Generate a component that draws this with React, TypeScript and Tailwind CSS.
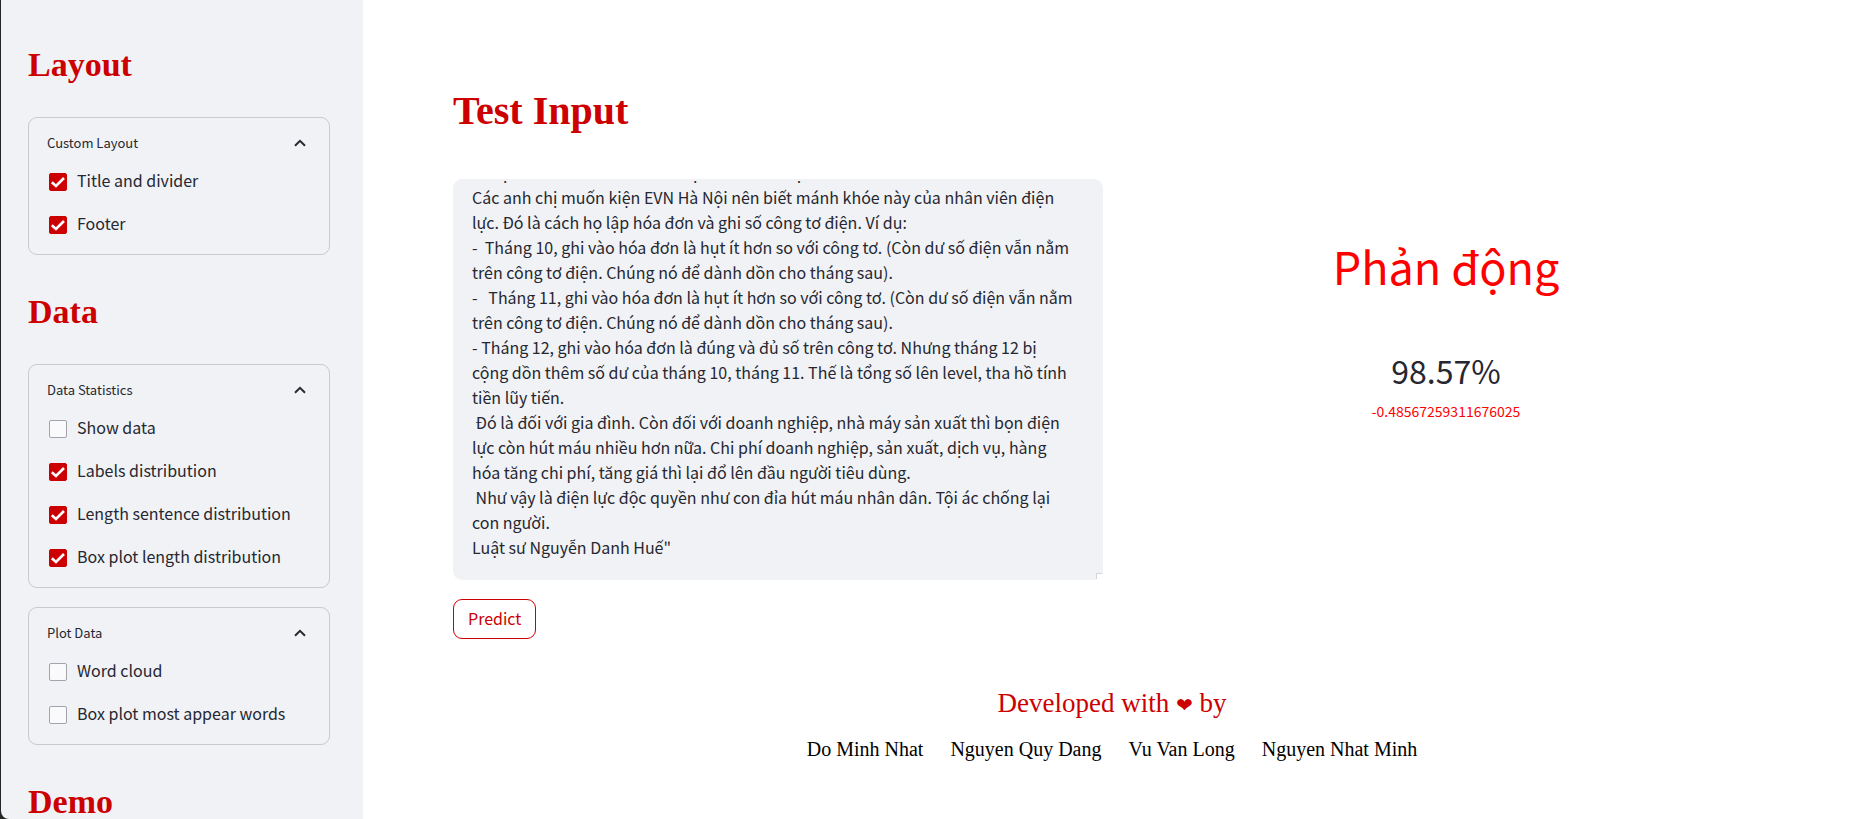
import { useLayoutEffect, useRef, useState } from "react";

const sans = "font-['Noto_Sans_CJK_SC','Noto_Sans',sans-serif]";
const serif = "font-['Liberation_Serif','DejaVu_Sans',serif]";

const ARTICLE = `Nhờ mọi người chia sẻ rộng rãi thông tin này:
Thoại cho biết trên các bản hiện có nhiều điện
Các anh chị muốn kiện EVN Hà Nội nên biết mánh khóe này của nhân viên điện lực. Đó là cách họ lập hóa đơn và ghi số công tơ điện. Ví dụ:
-  Tháng 10, ghi vào hóa đơn là hụt ít hơn so với công tơ. (Còn dư số điện vẫn nằm trên công tơ điện. Chúng nó để dành dồn cho tháng sau).
-   Tháng 11, ghi vào hóa đơn là hụt ít hơn so với công tơ. (Còn dư số điện vẫn nằm trên công tơ điện. Chúng nó để dành dồn cho tháng sau).
- Tháng 12, ghi vào hóa đơn là đúng và đủ số trên công tơ. Nhưng tháng 12 bị cộng dồn thêm số dư của tháng 10, tháng 11. Thế là tổng số lên level, tha hồ tính tiền lũy tiến.
 Đó là đối với gia đình. Còn đối với doanh nghiệp, nhà máy sản xuất thì bọn điện lực còn hút máu nhiều hơn nữa. Chi phí doanh nghiệp, sản xuất, dịch vụ, hàng hóa tăng chi phí, tăng giá thì lại đổ lên đầu người tiêu dùng.
 Như vậy là điện lực độc quyền như con đỉa hút máu nhân dân. Tội ác chống lại con người.
Luật sư Nguyễn Danh Huế"`;

const AUTHORS = ["Do Minh Nhat", "Nguyen Quy Dang", "Vu Van Long", "Nguyen Nhat Minh"];

type Option = { label: string; checked: boolean };

function CheckOption({ label, checked }: Option) {
  const [on, setOn] = useState(checked);
  return (
    <label className="flex h-[22px] cursor-pointer items-end gap-[10px] text-base leading-[22px]">
      <span className="grid size-[18px] shrink-0">
        <input
          type="checkbox"
          checked={on}
          onChange={(e) => setOn(e.target.checked)}
          className="col-start-1 row-start-1 size-[18px] appearance-none rounded-[2px] border border-[#a3a4ab] bg-[#fafafc] checked:border-[#cc0000] checked:bg-[#cc0000]"
        />
        {on && (
          <svg viewBox="0 0 18 18" className="pointer-events-none col-start-1 row-start-1 size-[18px]" aria-hidden="true">
            <path d="M2.8 9.2 L7 13 L15 5" fill="none" stroke="#fafafc" strokeWidth="2.7" />
          </svg>
        )}
      </span>
      {label}
    </label>
  );
}

function Expander({ title, options }: { title: string; options: Option[] }) {
  const [open, setOpen] = useState(true);
  return (
    <section className="rounded-[9px] border border-[#c9cacf] px-[18px] pt-[13px] pb-[20px]">
      <button
        type="button"
        aria-expanded={open}
        onClick={() => setOpen(!open)}
        className="flex h-6 w-full cursor-pointer items-center justify-between pr-[5px] text-[13px]"
      >
        {title}
        <svg viewBox="0 0 12 8" className={open ? "h-2 w-3" : "h-2 w-3 rotate-180"} aria-hidden="true">
          <path d="M1 6.8 L6 1.8 L11 6.8" fill="none" stroke="#262730" strokeWidth="2" />
        </svg>
      </button>
      {open && (
        <div className="mt-[14px] flex flex-col gap-[21px] pl-[2px]">
          {options.map((o) => (
            <CheckOption key={o.label} {...o} />
          ))}
        </div>
      )}
    </section>
  );
}

function SideHeading({ children }: { children: string }) {
  return <h2 className={`${serif} text-[34px] leading-[41px] font-bold text-[#cc0000]`}>{children}</h2>;
}

export default function App() {
  const box = useRef<HTMLTextAreaElement>(null);
  useLayoutEffect(() => {
    const scroll = () => {
      if (box.current) box.current.scrollTop = box.current.scrollHeight;
    };
    scroll();
    document.fonts.ready.then(scroll);
  }, []);

  return (
    <div className={`${sans} flex h-screen overflow-hidden bg-[#262626] text-[#262730]`}>
      <aside className="ml-px w-[362px] shrink-0 overflow-hidden rounded-bl-[8px] bg-[#f0f2f6] pt-[44px] pr-[33px] pl-[27px]">
        <SideHeading>Layout</SideHeading>
        <div className="mt-8">
          <Expander
            title="Custom Layout"
            options={[
              { label: "Title and divider", checked: true },
              { label: "Footer", checked: true },
            ]}
          />
        </div>
        <div className="mt-9">
          <SideHeading>Data</SideHeading>
        </div>
        <div className="mt-8 flex flex-col gap-[19px]">
          <Expander
            title="Data Statistics"
            options={[
              { label: "Show data", checked: false },
              { label: "Labels distribution", checked: true },
              { label: "Length sentence distribution", checked: true },
              { label: "Box plot length distribution", checked: true },
            ]}
          />
          <Expander
            title="Plot Data"
            options={[
              { label: "Word cloud", checked: false },
              { label: "Box plot most appear words", checked: false },
            ]}
          />
        </div>
        <div className="mt-9">
          <SideHeading>Demo</SideHeading>
        </div>
      </aside>

      <main className="min-w-0 flex-1 bg-white pt-[87px] pr-[83px] pl-[90px]">
        <h1 className={`${serif} text-[40px] leading-[48px] font-bold text-[#cc0000]`}>Test Input</h1>
        <div className="mt-11 grid grid-cols-2 gap-[18px]">
          <div>
            <div className="relative overflow-hidden rounded-[9px] bg-[#f0f2f6]">
              <textarea
                ref={box}
                aria-label="Test Input"
                defaultValue={ARTICLE}
                spellCheck={false}
                className="block h-[401px] w-full resize-none bg-transparent pt-[18px] pr-7 pb-5 pl-[19px] text-base leading-[25px] outline-none [scrollbar-width:none]"
              />
              <span className="pointer-events-none absolute right-px bottom-px size-[6px] border-t border-l border-[#d5d5d5] bg-white" />
            </div>
            <button
              type="button"
              className="mt-[19px] flex h-10 cursor-pointer items-center rounded-[9px] border border-[#cc0000] bg-white px-[14px] pb-[2px] text-base text-[#cc0000]"
            >
              Predict
            </button>
          </div>
          <div className="flex flex-col items-center pt-[51px]">
            <p className="text-[45px] leading-[72px] text-[#ff0000]">Phản động</p>
            <p className="mt-[41px] text-[32px] leading-[54px]">98.57%</p>
            <p className="mt-[2px] text-sm leading-6 text-[#ff0000]">-0.48567259311676025</p>
          </div>
        </div>
        <footer className={`${serif} mt-[46px] flex flex-col items-center`}>
          <p className="text-[27px] leading-9 text-[#cc0000]">
            Developed with <span className="text-[20px]">❤</span> by
          </p>
          <ul className="mt-3 flex gap-[27px] text-xl leading-7 text-black">
            {AUTHORS.map((name) => (
              <li key={name}>{name}</li>
            ))}
          </ul>
        </footer>
      </main>
    </div>
  );
}
